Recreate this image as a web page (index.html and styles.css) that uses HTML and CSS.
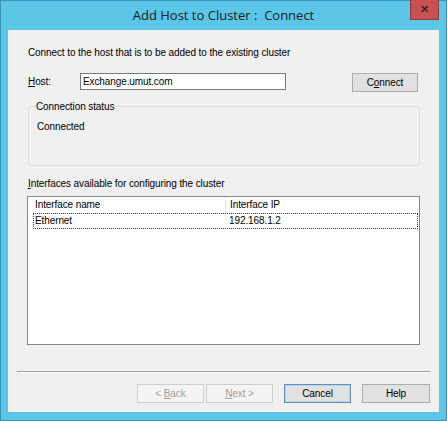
FILE: index.html
```html
<!DOCTYPE html>
<html lang="en">
<head>
    <meta charset="UTF-8">
    <title>Add Host to Cluster : Connect</title>
    <link rel="stylesheet" href="styles.css">
</head>
<body>
    <div class="window">
        <div class="titlebar">
            <span></span>
            <span class="title">Add Host to Cluster :&nbsp; Connect</span>
            <button class="close">&#x2715;</button>
        </div>

        <div class="client">
            <p class="intro">Connect to the host that is to be added to the existing cluster</p>

            <div class="host-row">
                <label class="host-label"><u>H</u>ost:</label>
                <input class="host-input" type="text" value="Exchange.umut.com">
                <button class="btn btn-connect">C<u>o</u>nnect</button>
            </div>

            <fieldset class="status">
                <legend>Connection status</legend>
                <p class="status-text">Connected</p>
            </fieldset>

            <p class="list-title"><u>I</u>nterfaces available for configuring the cluster</p>

            <div class="listview">
                <div class="list-head">
                    <span class="col-name">Interface name</span>
                    <span class="col-ip">Interface IP</span>
                </div>
                <div class="list-row focused">
                    <span class="col-name">Ethernet</span>
                    <span class="col-ip">192.168.1.2</span>
                </div>
            </div>

            <div class="separator"></div>

            <div class="buttons">
                <button class="btn disabled">&lt; <u>B</u>ack</button>
                <button class="btn disabled btn-next"><u>N</u>ext &gt;</button>
                <button class="btn default">Cancel</button>
                <button class="btn btn-help">Help</button>
            </div>
        </div>
    </div>
</body>
</html>
```

FILE: styles.css
```css
/* Fenetre style Windows 8 */
body {
    margin: 0;
    font-family: "Liberation Sans", Arial, sans-serif;
    font-size: 10px;
    letter-spacing: -0.1px;
    color: #000000;
}

.window {
    width: 447px;
    height: 421px;
    box-sizing: border-box;
    background-color: #5cc6e8;
    border: 1px solid #3a94b8;
    padding: 0 7px 8px;
    display: flex;
    flex-direction: column;
}

.titlebar {
    height: 29px;
    display: grid;
    grid-template-columns: 1fr auto 1fr;
    align-items: start;
}

.title {
    font-family: "Open Sans", sans-serif;
    font-size: 13px;
    letter-spacing: 0;
    color: #1b1b1b;
    line-height: 28px;
}

.close {
    justify-self: end;
    width: 29px;
    height: 20px;
    margin-top: -1px;
    background-color: #c75050;
    border: 1px solid #8d3a3a;
    border-top: none;
    color: #111111;
    font-size: 11px;
    font-weight: bold;
    padding: 0;
    font-family: "DejaVu Sans", sans-serif;
}

.client {
    flex: 1;
    background-color: #f0f0f0;
    display: flex;
    flex-direction: column;
    padding-top: 16px;
}

p {
    margin: 0;
}

.intro {
    margin-left: 20px;
    line-height: 13px;
}

.host-row {
    margin-top: 14px;
    padding: 0 21px 0 20px;
    display: flex;
    align-items: flex-start;
    height: 19px;
}

.host-label {
    flex: 0 0 52px;
    line-height: 17px;
}

.host-input {
    width: 206px;
    height: 17px;
    box-sizing: border-box;
    border: 1px solid #7a7a7a;
    background: #ffffff;
    font-family: inherit;
    font-size: 10px;
    letter-spacing: -0.1px;
    padding: 0 2px;
    margin: 0;
}

.btn {
    width: 67px;
    height: 19px;
    box-sizing: border-box;
    background-color: #e1e1e1;
    border: 1px solid #adadad;
    font-family: inherit;
    font-size: 10px;
    letter-spacing: -0.1px;
    color: #000000;
    padding: 0;
    margin: 0;
}

.btn-connect {
    margin-left: auto;
    width: 66px;
}

.status {
    margin: 8px 19px 0 20px;
    padding: 0 6px;
    border: 1px solid #dcdcdc;
    border-radius: 3px;
    height: 66px;
    box-sizing: border-box;
}

.status legend {
    padding: 0 1px;
    line-height: 13px;
}

.status-text {
    margin-top: 7px;
    margin-left: 2px;
    line-height: 13px;
}

.list-title {
    margin: 11px 0 0 20px;
    line-height: 13px;
}

.listview {
    margin: 6px 19px 0 19px;
    height: 149px;
    box-sizing: border-box;
    background-color: #ffffff;
    border: 1px solid #828790;
}

.list-head,
.list-row {
    display: flex;
    height: 16px;
    line-height: 16px;
}

.list-head .col-name {
    border-right: 1px solid #e5e5e5;
}

.col-name {
    flex: 0 0 190px;
    padding-left: 7px;
}

.col-ip {
    padding-left: 4px;
}

.list-row {
    margin: 0 1px 0 5px;
    border: 1px dotted #333333;
    height: 16px;
    line-height: 14px;
    box-sizing: border-box;
}

.list-row .col-name {
    flex-basis: 190px;
    padding-left: 1px;
}

.separator {
    margin: 26px 9px 0 9px;
    border-top: 1px solid #a0a0a0;
    border-bottom: 1px solid #ffffff;
}

.buttons {
    margin-top: 11px;
    padding-right: 9px;
    display: flex;
    justify-content: flex-end;
    gap: 11px;
}

.disabled {
    background-color: #f4f4f4;
    border-color: #cfcfcf;
    color: #a0a0a0;
}

.btn-next {
    margin-left: -9px;
}

.default {
    border-color: #5a8fc0;
    box-shadow: inset 0 0 0 1px #bcd4ea;
}

.btn-help {
    width: 68px;
}
```
